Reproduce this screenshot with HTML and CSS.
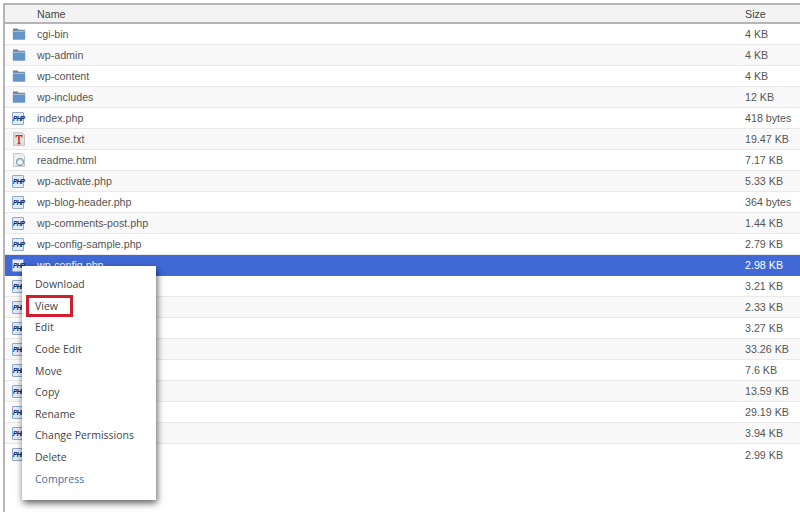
FILE: index.html
```html
<!DOCTYPE html>
<html lang="en">
<head>
<meta charset="utf-8">
<title>File Manager</title>
<link rel="stylesheet" href="styles.css">
</head>
<body>
<svg class="defs" width="0" height="0" aria-hidden="true">
  <symbol id="folder" viewBox="0 0 14 14">
    <path d="M1 1.500h4.600l1 1.300H13v1.500H1z" fill="#75808c"/>
    <path d="M.8 3.800h12.400v8.300a.7.7 0 0 1-.7.7H1.500a.7.7 0 0 1-.7-.7z" fill="#6494c8"/>
    <path d="M.8 3.800h12.400v1.200H.8z" fill="#9dbbdb"/>
  </symbol>
  <symbol id="txt" viewBox="0 0 14 14">
    <path d="M1.500.6h8.600l2.400 2.400v10.400h-11z" fill="#e4e2e0" stroke="#b8b4b0" stroke-width=".7"/>
    <path d="M3.500 3h7v2.400h-.9l-.4-1.200H7.800v6.900l1 .4v.7H5.200v-.7l1-.4V4.200H4.800l-.4 1.200h-.9z" fill="#d5301f"/>
  </symbol>
  <symbol id="html" viewBox="0 0 14 14">
    <path d="M1.500.6h8.600l2.400 2.400v10.400h-11z" fill="#eef0f2" stroke="#aab0b6" stroke-width=".7"/>
    <circle cx="8" cy="9" r="3.700" fill="#a9bccf" stroke="#7e94aa" stroke-width=".8"/>
    <path d="M5.500 8.500 8 6.300l2.500 2.200v2.700h-5z" fill="#f2f5f8"/>
  </symbol>
</svg>
<main class="frame">
  <div class="head row">
    <span class="cell-icon"></span><span class="name">Name</span><span class="size">Size</span>
  </div>
  <div class="row"><svg class="icon"><use href="#folder"/></svg><span class="name">cgi-bin</span><span class="size">4 KB</span></div>
  <div class="row"><svg class="icon"><use href="#folder"/></svg><span class="name">wp-admin</span><span class="size">4 KB</span></div>
  <div class="row"><svg class="icon"><use href="#folder"/></svg><span class="name">wp-content</span><span class="size">4 KB</span></div>
  <div class="row"><svg class="icon"><use href="#folder"/></svg><span class="name">wp-includes</span><span class="size">12 KB</span></div>
  <div class="row"><span class="php">PHP</span><span class="name">index.php</span><span class="size">418 bytes</span></div>
  <div class="row"><svg class="icon"><use href="#txt"/></svg><span class="name">license.txt</span><span class="size">19.47 KB</span></div>
  <div class="row"><svg class="icon"><use href="#html"/></svg><span class="name">readme.html</span><span class="size">7.17 KB</span></div>
  <div class="row"><span class="php">PHP</span><span class="name">wp-activate.php</span><span class="size">5.33 KB</span></div>
  <div class="row"><span class="php">PHP</span><span class="name">wp-blog-header.php</span><span class="size">364 bytes</span></div>
  <div class="row"><span class="php">PHP</span><span class="name">wp-comments-post.php</span><span class="size">1.44 KB</span></div>
  <div class="row"><span class="php">PHP</span><span class="name">wp-config-sample.php</span><span class="size">2.79 KB</span></div>
  <div class="row selected"><span class="php">PHP</span><span class="name">wp-config.php</span><span class="size">2.98 KB</span></div>
  <div class="row"><span class="php">PHP</span><span class="name"></span><span class="size">3.21 KB</span></div>
  <div class="row"><span class="php">PHP</span><span class="name"></span><span class="size">2.33 KB</span></div>
  <div class="row"><span class="php">PHP</span><span class="name"></span><span class="size">3.27 KB</span></div>
  <div class="row"><span class="php">PHP</span><span class="name"></span><span class="size">33.26 KB</span></div>
  <div class="row"><span class="php">PHP</span><span class="name"></span><span class="size">7.6 KB</span></div>
  <div class="row"><span class="php">PHP</span><span class="name"></span><span class="size">13.59 KB</span></div>
  <div class="row"><span class="php">PHP</span><span class="name"></span><span class="size">29.19 KB</span></div>
  <div class="row"><span class="php">PHP</span><span class="name"></span><span class="size">3.94 KB</span></div>
  <div class="row last"><span class="php">PHP</span><span class="name"></span><span class="size">2.99 KB</span></div>
</main>
<ul class="menu">
  <li>Download</li>
  <li class="marked">View</li>
  <li>Edit</li>
  <li>Code Edit</li>
  <li>Move</li>
  <li>Copy</li>
  <li>Rename</li>
  <li>Change Permissions</li>
  <li>Delete</li>
  <li class="accent">Compress</li>
</ul>
</body>
</html>
```
FILE: styles.css
```css
html, body {
  margin: 0;
  height: 100%;
  overflow: hidden;
  background: #fff;
}
body {
  position: relative;
  padding: 3px 0 0 3px;
  box-sizing: border-box;
  font-family: "Liberation Sans", Arial, sans-serif;
  font-size: 10.700px;
  color: #555;
}
.defs {
  position: absolute;
}
.frame {
  height: 509px;
  box-sizing: border-box;
  border-top: 2px solid #b5b5b5;
  border-left: 2px solid #b5b5b5;
}
.row {
  display: flex;
  align-items: center;
  height: 21px;
  box-sizing: border-box;
  border-bottom: 1px solid #e9e9e9;
  padding-left: 7px;
}
.row:nth-child(even) {
  background: #fff;
}
.row:nth-child(odd) {
  background: #f9f9f9;
}
.row.head {
  height: 19px;
  background: #f3f3f3;
  border-bottom: 2px solid #b5b5b5;
  color: #444;
}
.row.selected {
  background: #4169d6;
  color: #fff;
  border-bottom-color: #4169d6;
}
.row.last {
  border-bottom: 0;
}
.icon, .cell-icon {
  flex: none;
  width: 14px;
  height: 14px;
}
.php {
  flex: none;
  width: 12px;
  height: 13px;
  margin-right: 2px;
  box-sizing: border-box;
  border: 1px solid #8ea8d2;
  border-radius: 1px;
  background: #e3ebf8;
  color: #0f2a5e;
  font-size: 6.500px;
  font-weight: 700;
  font-style: italic;
  line-height: 11px;
  letter-spacing: -.6px;
  text-align: center;
}
.name {
  flex: 1;
  margin-left: 11px;
}
.size {
  width: 55px;
}
.menu {
  position: absolute;
  left: 22px;
  top: 266px;
  width: 134px;
  height: 234px;
  box-sizing: border-box;
  margin: 0;
  padding: 8px 0 0;
  list-style: none;
  background: #fff;
  box-shadow: 1px 3px 7px rgba(0, 0, 0, .65);
  font-family: "Open Sans", sans-serif;
  font-size: 10.500px;
  color: #444;
}
.menu li {
  height: 21.650px;
  line-height: 21.650px;
  padding-left: 13px;
}
.menu .marked {
  position: relative;
}
.menu .marked::after {
  content: "";
  position: absolute;
  left: 4px;
  top: -1px;
  width: 47px;
  height: 22px;
  box-sizing: border-box;
  border: 3px solid #cf1f2e;
}
.menu .accent {
  color: #4570a8;
}
```
